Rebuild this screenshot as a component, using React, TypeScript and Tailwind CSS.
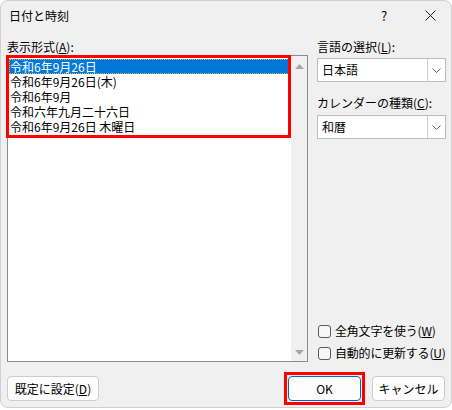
const FORMATS = [
  "令和6年9月26日",
  "令和6年9月26日(木)",
  "令和6年9月",
  "令和六年九月二十六日",
  "令和6年9月26日 木曜日",
];

function Chevron() {
  return (
    <svg width="9" height="5" viewBox="0 0 9 5" fill="none">
      <path d="M0.5 0.5 L4.5 4.5 L8.5 0.5" stroke="#606060" strokeWidth="1" />
    </svg>
  );
}

function Select({ value }: { value: string }) {
  return (
    <div className="h-[24px] flex border border-[#bdbdbd] bg-white">
      <div className="flex-1 pl-[4px] leading-[22px]">{value}</div>
      <div className="w-[18px] border-l border-[#d0d0d0] flex items-center justify-center">
        <Chevron />
      </div>
    </div>
  );
}

function Check({ label, mn }: { label: string; mn: string }) {
  return (
    <div className="h-[22px] flex items-center whitespace-nowrap">
      <div className="shrink-0 ml-[1px] w-[13px] h-[13px] rounded-[3px] border border-[#5c5c5c] bg-[#f6f6f6]" />
      <span className="ml-[4px] leading-[16px] tracking-[-0.2px]">
        {label}(<span className="underline">{mn}</span>)
      </span>
    </div>
  );
}

function Triangle({ up }: { up?: boolean }) {
  return (
    <svg width="9" height="5" viewBox="0 0 9 5">
      <path d={up ? "M0 5 L4.5 0 L9 5 Z" : "M0 0 L4.5 5 L9 0 Z"} fill="#a6a6a6" />
    </svg>
  );
}

export default function App() {
  return (
    <div className="w-[452px] h-[410px] bg-white text-[12px] text-black font-['Noto_Sans_CJK_JP',sans-serif]">
      <div className="h-[408px] rounded-[8px] border border-[#cfcfcf] bg-[#f0f0f0] flex flex-col overflow-hidden">
        {/* title bar */}
        <div className="h-[29px] shrink-0 flex items-center pl-[8px]">
          <span className="leading-[16px]">日付と時刻</span>
          <span className="ml-auto w-[50px] text-center text-[13px]">?</span>
          <span className="w-[42px] flex justify-center">
            <svg width="11" height="11" viewBox="0 0 11 11">
              <path d="M0.5 0.5 L10.5 10.5 M10.5 0.5 L0.5 10.5" stroke="#222" strokeWidth="1" />
            </svg>
          </span>
        </div>

        {/* body */}
        <div className="flex pl-[6px] pt-[8px]">
          <div className="w-[301px] flex flex-col">
            <div className="h-[17px] leading-[17px]">
              表示形式(<span className="underline">A</span>):
            </div>
            <div className="relative h-[307px] flex border border-[#8a8c94] bg-white">
              <div className="flex-1 pt-[3px] pl-[1px]">
                {FORMATS.map((f, i) => (
                  <div
                    key={f}
                    className={
                      i === 0
                        ? "h-[15px] leading-[15px] pl-[1px] bg-[#0078d7] text-white outline-1 outline-dotted outline-[#d9b45f] -outline-offset-1"
                        : "h-[15px] leading-[15px] pl-[1px]"
                    }
                  >
                    {f}
                  </div>
                ))}
              </div>
              <div className="w-[16px] bg-[#f0f0f0] flex flex-col">
                <div className="h-[20px] flex items-center justify-center">
                  <Triangle up />
                </div>
                <div className="mt-auto h-[18px] flex items-center justify-center">
                  <Triangle />
                </div>
              </div>
              <div className="absolute left-[-2px] top-[-1px] w-[285px] h-[83px] border-[3px] border-[#ff0000] pointer-events-none" />
            </div>
          </div>

          <div className="ml-[9px] w-[129px] flex flex-col">
            <div className="h-[17px] leading-[17px]">
              言語の選択(<span className="underline">L</span>):
            </div>
            <div className="mt-[3px]">
              <Select value="日本語" />
            </div>
            <div className="mt-[12px] h-[17px] leading-[17px]">
              カレンダーの種類(<span className="underline">C</span>):
            </div>
            <div className="mt-[4px]">
              <Select value="和暦" />
            </div>
            <div className="mt-[181px]">
              <Check label="全角文字を使う" mn="W" />
              <Check label="自動的に更新する" mn="U" />
            </div>
          </div>
        </div>

        {/* buttons */}
        <div className="mt-[8px] h-[33px] flex items-center pl-[6px] pr-[6px]">
          <button className="w-[92px] h-[25px] rounded-[4px] border border-[#cccccc] bg-[#fdfdfd] leading-[23px]">
            既定に設定(<span className="underline">D</span>)
          </button>
          <div className="ml-auto border-[3px] border-[#ff0000] p-[1px]">
            <button className="w-[73px] h-[25px] rounded-[4px] border border-[#0067c0] bg-[#fdfdfd] leading-[23px]">
              OK
            </button>
          </div>
          <button className="ml-[7px] w-[73px] h-[25px] rounded-[4px] border border-[#cccccc] bg-[#fdfdfd] leading-[23px]">
            キャンセル
          </button>
        </div>
      </div>
    </div>
  );
}
